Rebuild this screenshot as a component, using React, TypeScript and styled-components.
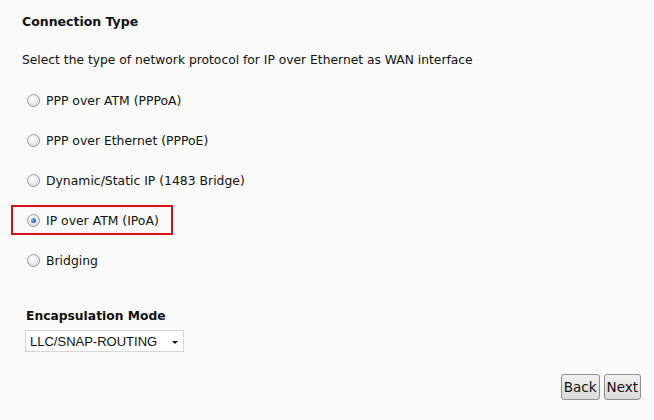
import React from "react";
import styled, { createGlobalStyle } from "styled-components";

const Global = createGlobalStyle`
  html, body { margin: 0; padding: 0; background: #fafafa; }
  body { font-family: "DejaVu Sans", Tahoma, sans-serif; color: #111; }
`;

const Page = styled.div`
  width: 654px;
  height: 420px;
  box-sizing: border-box;
  padding: 14px 13px 0 0;
  display: flex;
  flex-direction: column;
`;

const Title = styled.div`
  font-weight: bold;
  font-size: 12.5px;
  line-height: 16px;
  margin-left: 22px;
`;

const Desc = styled.div`
  font-size: 12.3px;
  line-height: 16px;
  margin: 22px 0 0 22px;
`;

const Options = styled.div`
  display: flex;
  flex-direction: column;
  gap: 10px;
  margin-top: 17px;
`;

const Option = styled.label<{ $highlight?: boolean }>`
  display: flex;
  align-items: center;
  gap: 6px;
  width: fit-content;
  height: 30px;
  box-sizing: border-box;
  margin-left: 11px;
  padding: 0 12px 0 14px;
  border: 2px solid ${(p) => (p.$highlight ? "#d0111b" : "transparent")};
  font-size: 12.4px;
`;

const Radio = styled.span<{ $checked?: boolean }>`
  width: 11px;
  height: 11px;
  border-radius: 50%;
  border: 1px solid #9a9a9a;
  background: radial-gradient(circle at 40% 35%, #ffffff 0%, #e8e8e8 55%, #c8c8c8 100%);
  display: flex;
  align-items: center;
  justify-content: center;
  flex: none;
  &::after {
    content: "";
    display: ${(p) => (p.$checked ? "block" : "none")};
    width: 5px;
    height: 5px;
    border-radius: 50%;
    background: radial-gradient(circle at 35% 35%, #7fb8e8 0%, #2a6aa8 60%, #1b4a7a 100%);
  }
`;

const SubTitle = styled.div`
  font-weight: bold;
  font-size: 12.3px;
  line-height: 16px;
  margin: 33px 0 0 26px;
`;

const Select = styled.div`
  margin: 6px 0 0 25px;
  width: 159px;
  height: 22px;
  box-sizing: border-box;
  border: 1px solid #d6d6d6;
  background: #fff;
  display: flex;
  align-items: center;
  justify-content: space-between;
  padding: 0 5px 0 4px;
  font-family: "Liberation Sans", Arial, sans-serif;
  font-size: 13px;
`;

const Caret = styled.span`
  width: 0;
  height: 0;
  border-left: 3px solid transparent;
  border-right: 3px solid transparent;
  border-top: 3px solid #111;
  margin-top: 2px;
`;

const Buttons = styled.div`
  display: flex;
  justify-content: flex-end;
  gap: 4px;
  margin-top: 22px;
`;

const Button = styled.button`
  height: 26px;
  padding: 0 2px;
  border: 1px solid #8f8f8f;
  border-radius: 3px;
  background: linear-gradient(#f0f0f0, #d9d9d9);
  font-family: "DejaVu Sans", Tahoma, sans-serif;
  font-size: 13.5px;
  color: #111;
`;

const options = [
  "PPP over ATM (PPPoA)",
  "PPP over Ethernet (PPPoE)",
  "Dynamic/Static IP (1483 Bridge)",
  "IP over ATM (IPoA)",
  "Bridging",
];

export default function App() {
  return (
    <>
      <Global />
      <Page>
        <Title>Connection Type</Title>
        <Desc>Select the type of network protocol for IP over Ethernet as WAN interface</Desc>
        <Options>
          {options.map((o, i) => (
            <Option key={o} $highlight={i === 3}>
              <Radio $checked={i === 3} />
              {o}
            </Option>
          ))}
        </Options>
        <SubTitle>Encapsulation Mode</SubTitle>
        <Select>
          LLC/SNAP-ROUTING
          <Caret />
        </Select>
        <Buttons>
          <Button>Back</Button>
          <Button>Next</Button>
        </Buttons>
      </Page>
    </>
  );
}
